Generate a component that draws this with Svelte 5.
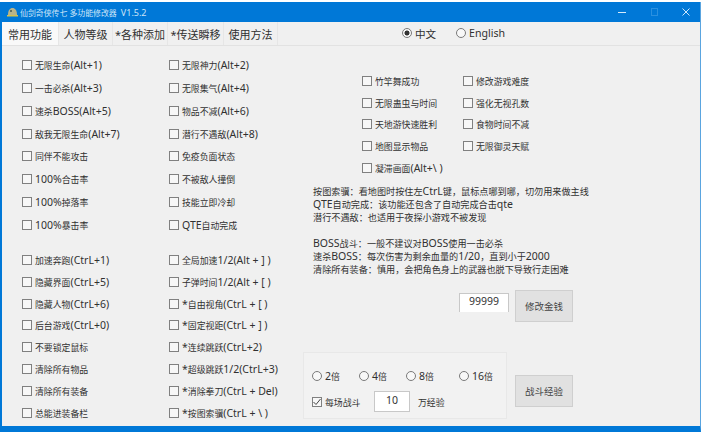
<script lang="ts">
  const tabs = ['常用功能', '人物等级', '*各种添加', '*传送瞬移', '使用方法'];

  const mainOpts = [
    '无限生命(Alt+1)', '无限神力(Alt+2)',
    '一击必杀(Alt+3)', '无限集气(Alt+4)',
    '速杀BOSS(Alt+5)', '物品不减(Alt+6)',
    '敌我无限生命(Alt+7)', '潜行不遇敌(Alt+8)',
    '同伴不能攻击', '免疫负面状态',
    '100%合击率', '不被敌人撞倒',
    '100%掉落率', '技能立即冷却',
    '100%暴击率', 'QTE自动完成',
  ];

  const hotkeyOpts = [
    '加速奔跑(CtrL+1)', '全局加速1/2(Alt + ] )',
    '隐藏界面(CtrL+5)', '子弹时间1/2(Alt + [ )',
    '隐藏人物(CtrL+6)', '*自由视角(CtrL + [ )',
    '后台游戏(CtrL+0)', '*固定视距(CtrL + ] )',
    '不要锁定鼠标', '*连续跳跃(CtrL+2)',
    '清除所有物品', '*超级跳跃1/2(CtrL+3)',
    '清除所有装备', '*消除拳刀(CtrL + Del)',
    '总能进装备栏', '*按图索骥(CtrL + \\ )',
  ];

  const extraOpts = [
    '竹竿舞成功', '修改游戏难度',
    '无限蛊虫与时间', '强化无视孔数',
    '天地游快速胜利', '食物时间不减',
    '地图显示物品', '无限御灵天赋',
    '凝滞画面(Alt+\\ )',
  ];

  const notes = [
    '按图索骥：看地图时按住左CtrL键，鼠标点哪到哪，切勿用来做主线',
    'QTE自动完成：该功能还包含了自动完成合击qte',
    '潜行不遇敌：也适用于夜探小游戏不被发现',
    '',
    'BOSS战斗：一般不建议对BOSS使用一击必杀',
    '速杀BOSS：每次伤害为剩余血量的1/20，直到小于2000',
    '清除所有装备：慎用，会把角色身上的武器也脱下导致行走困难',
  ];

  const multipliers = ['2倍', '4倍', '8倍', '16倍'];

  // The app's Chinese glyphs are set smaller than its Latin ones, so split the runs.
  function runs(s: string) {
    return s
      .split(/([\u3000-\u9fff\uff00-\uffef]+)/)
      .filter(Boolean)
      .map((text) => ({ text, cjk: /[\u3000-\u9fff\uff00-\uffef]/.test(text) }));
  }
</script>

{#snippet mixed(s)}
  <span>{#each runs(s) as r}<span class:cjk={r.cjk}>{r.text}</span>{/each}</span>
{/snippet}

<div class="window">
  <header class="titlebar">
    <svg class="app-icon" width="11" height="10" viewBox="0 0 11 10">
      <path d="M1 8 C1 3 3 1 5.5 1 C8 1 10 3 10 8 Z" fill="#b9b48a" />
      <path d="M0 8 H11 V9.5 H0 Z" fill="#d8c24a" />
      <circle cx="4" cy="4" r="1" fill="#4a5a50" />
    </svg>
    <span class="app-title">仙剑奇侠传七 多功能修改器&nbsp; <span class="version">V1.5.2</span></span>
    <div class="controls">
      <svg width="72" height="12" viewBox="0 0 72 12">
        <path d="M0 6.5 H8" stroke="#d5ebfb" stroke-width="1" />
        <rect x="33.5" y="2.5" width="6" height="7" fill="none" stroke="#2a90e0" />
        <path d="M64.5 2.5 L71.5 9.5 M71.5 2.5 L64.5 9.5" stroke="#cfe7fa" stroke-width="1" />
      </svg>
    </div>
  </header>

  <nav class="tabbar">
    <div class="tabs">
      {#each tabs as tab, i (tab)}
        <span class="tab" class:active={i === 0}>{tab}</span>
      {/each}
    </div>
    <div class="lang">
      <span class="lang-item zh"><i class="radio on"></i>中文</span>
      <span class="lang-item"><i class="radio"></i>English</span>
    </div>
  </nav>

  <main class="content">
    <section class="left">
      <div class="opts main-opts">
        {#each mainOpts as o (o)}
          <label class="opt"><i class="box"></i>{@render mixed(o)}</label>
        {/each}
      </div>
      <div class="opts hotkey-opts">
        {#each hotkeyOpts as o (o)}
          <label class="opt"><i class="box"></i>{@render mixed(o)}</label>
        {/each}
      </div>
    </section>

    <section class="right">
      <div class="opts extra-opts">
        {#each extraOpts as o (o)}
          <label class="opt"><i class="box"></i>{@render mixed(o)}</label>
        {/each}
      </div>

      <div class="notes">
        {#each notes as line}
          <p>{@render mixed(line)}</p>
        {/each}
      </div>

      <div class="money">
        <div class="field money-field">99999</div>
        <button class="btn">修改金钱</button>
      </div>

      <div class="exp">
        <div class="group">
          <div class="mults">
            {#each multipliers as m (m)}
              <span class="mult"><i class="radio"></i>{@render mixed(m)}</span>
            {/each}
          </div>
          <div class="per-battle">
            <label class="opt every">
              <i class="box">
                <svg width="8" height="8" viewBox="0 0 8 8">
                  <path d="M0.5 4 L3 6.5 L7.5 1" fill="none" stroke="#444" stroke-width="1" />
                </svg>
              </i>{@render mixed('每场战斗')}
            </label>
            <div class="field exp-field">10</div>
            {@render mixed('万经验')}
          </div>
        </div>
        <button class="btn exp-btn">战斗经验</button>
      </div>
    </section>
  </main>
</div>

<style>
  :global(body) {
    margin: 0;
    background: #fff;
  }

  .window {
    box-sizing: border-box;
    width: 701px;
    height: 430px;
    margin-top: 2px;
    border-left: 2px solid #0078d7;
    border-right: 1px solid #5aa5e0;
    border-bottom: 6px solid #0078d7;
    background: #f0f0f0;
    color: #303030;
    font-family: 'Noto Sans', 'Noto Sans CJK SC', sans-serif;
    font-size: 10.5px;
    overflow: hidden;
  }

  .cjk {
    font-size: 8.9px;
  }

  .notes .cjk {
    font-size: 9.15px;
  }

  .titlebar {
    height: 20px;
    background: #0078d7;
    display: flex;
    align-items: center;
    padding-left: 5px;
    color: #cde5f8;
    font-size: 7.9px;
  }

  .version {
    font-size: 9px;
  }

  .app-icon {
    margin-right: 2px;
  }

  .controls {
    margin-left: auto;
    margin-right: 10px;
    display: flex;
  }

  .tabbar {
    height: 24px;
    box-sizing: border-box;
    display: flex;
    align-items: stretch;
    border-bottom: 1px solid #e2e2e2;
  }

  .tabs {
    display: grid;
    grid-template-columns: 57px 54px 55px 56px 54px;
    font-size: 11px;
  }

  .tab {
    display: flex;
    align-items: center;
    justify-content: center;
    padding-top: 1px;
    white-space: nowrap;
    border-right: 1px solid #e6e6e6;
  }

  .tab.active {
    background: #f9f9f9;
  }

  .lang {
    margin-left: 124px;
    padding-bottom: 1px;
    display: flex;
    align-items: center;
    gap: 20px;
    font-size: 10.6px;
  }

  .lang-item {
    display: flex;
    align-items: center;
    gap: 3px;
    white-space: nowrap;
  }

  .lang-item.zh {
    width: 34px;
  }

  .radio {
    display: inline-block;
    box-sizing: border-box;
    flex: none;
    width: 10px;
    height: 10px;
    border: 1px solid #7a7a7a;
    border-radius: 50%;
    background: #f8f8f8;
  }

  .radio.on {
    background: radial-gradient(circle, #333 0 2.2px, #f8f8f8 2.8px);
  }

  .content {
    display: flex;
  }

  .left {
    width: 301px;
    flex: none;
    box-sizing: border-box;
    padding: 8px 0 0 20px;
  }

  .opts {
    display: grid;
    grid-template-columns: 147px auto;
  }

  .opt {
    display: flex;
    align-items: center;
    gap: 3px;
    white-space: nowrap;
  }

  .main-opts {
    grid-auto-rows: 22.75px;
  }

  .hotkey-opts {
    grid-auto-rows: 21.85px;
    margin-top: 13px;
  }

  .box {
    display: inline-flex;
    box-sizing: border-box;
    flex: none;
    width: 10px;
    height: 10px;
    border: 1px solid #808080;
    background: #f7f7f7;
  }

  .right {
    flex: 1;
  }

  .extra-opts {
    margin: 24px 0 0 59px;
    grid-template-columns: 101px auto;
    grid-auto-rows: 21.75px;
  }

  .notes {
    margin: 6px 0 0 10px;
    line-height: 13.1px;
  }

  .notes p {
    margin: 0;
    height: 13.1px;
    white-space: nowrap;
  }

  .money {
    display: flex;
    align-items: flex-start;
    gap: 6px;
    margin: 14px 0 0 156px;
  }

  .field {
    box-sizing: border-box;
    background: #fff;
    border: 1px solid #c8c8c8;
    text-align: center;
    color: #333;
  }

  .money-field {
    width: 50px;
    height: 19px;
    margin-top: 3px;
    border-bottom: none;
    line-height: 15px;
  }

  .btn {
    width: 58px;
    height: 32px;
    padding: 0;
    box-sizing: border-box;
    background: #e1e1e1;
    border: 1px solid #cfcfcf;
    color: #444;
    font: inherit;
    font-size: 9.5px;
  }

  .exp {
    display: flex;
    gap: 8px;
    margin-top: 30px;
  }

  .group {
    box-sizing: border-box;
    width: 204px;
    height: 67px;
    flex: none;
    border: 1px solid #e8e8e8;
    background: #f2f2f2;
    padding: 16px 0 0 8px;
  }

  .mults {
    display: grid;
    grid-template-columns: 47px 47px 53px auto;
    height: 14px;
    align-items: center;
  }

  .mult {
    display: flex;
    align-items: center;
    gap: 3px;
  }

  .per-battle {
    display: flex;
    align-items: center;
    margin-top: 8px;
  }

  .every {
    width: 62px;
  }

  .exp-field {
    width: 36px;
    height: 21px;
    margin-right: 8px;
    line-height: 17px;
  }

  .exp-btn {
    margin-top: 23px;
  }
</style>
